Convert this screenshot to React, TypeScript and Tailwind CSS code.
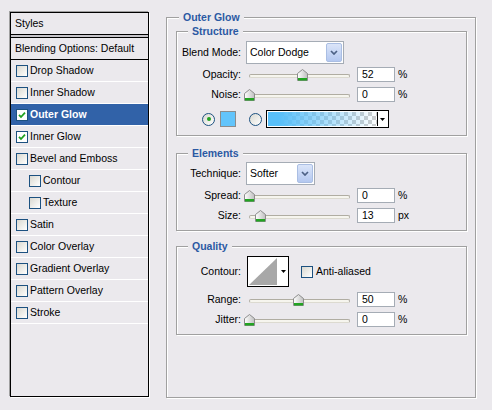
const styleItems = [
  { name: "Drop Shadow", checked: false, indent: false },
  { name: "Inner Shadow", checked: false, indent: false },
  { name: "Outer Glow", checked: true, indent: false, selected: true },
  { name: "Inner Glow", checked: true, indent: false },
  { name: "Bevel and Emboss", checked: false, indent: false },
  { name: "Contour", checked: false, indent: true },
  { name: "Texture", checked: false, indent: true },
  { name: "Satin", checked: false, indent: false },
  { name: "Color Overlay", checked: false, indent: false },
  { name: "Gradient Overlay", checked: false, indent: false },
  { name: "Pattern Overlay", checked: false, indent: false },
  { name: "Stroke", checked: false, indent: false },
];

const CheckBox = ({ checked }: { checked: boolean }) => (
  <span
    className={
      checked
        ? "flex h-[12px] w-[12px] shrink-0 items-center justify-center border border-[#1c5180] bg-white"
        : "flex h-[12px] w-[12px] shrink-0 items-center justify-center border border-[#1c5180] bg-[linear-gradient(135deg,#d9d8d0,#ffffff)]"
    }
  >
    {checked && (
      <svg width="8" height="8" viewBox="0 0 8 8">
        <path d="M1 3.8 L3 6 L7 1.6" stroke="#21a121" strokeWidth="1.8" fill="none" />
      </svg>
    )}
  </span>
);

const Radio = ({ on }: { on: boolean }) => (
  <span className="flex h-[13px] w-[13px] shrink-0 items-center justify-center rounded-full border border-[#1c5180] bg-[linear-gradient(135deg,#d9d8d0,#ffffff)]">
    {on && <span className="h-[4px] w-[4px] rounded-full bg-[#21a121]" />}
  </span>
);

const DownTriangle = () => (
  <svg width="5" height="3" viewBox="0 0 5 3">
    <path d="M0 0 H5 L2.5 3 Z" fill="#000" />
  </svg>
);

type SelectProps = { value: string; width: string };

const Select = ({ value, width }: SelectProps) => (
  <div className={`ml-[5px] flex h-[23px] items-center border border-[#a5acb5] bg-white pl-[3px] pr-px ${width}`}>
    <span className="flex-1">{value}</span>
    <span className="flex h-[19px] w-[16px] items-center justify-center rounded-[2px] border border-[#aabee3] bg-[linear-gradient(#dbe5f9,#b4c8f0)]">
      <svg width="8" height="5" viewBox="0 0 8 5">
        <path d="M1 1 L4 4 L7 1" stroke="#4d6185" strokeWidth="1.7" fill="none" />
      </svg>
    </span>
  </div>
);

const Slider = ({ pos }: { pos: number }) => (
  <div className="relative ml-[3px] flex h-[20px] w-[113px] items-center">
    <div className="ml-[5px] mr-[7px] mt-[4px] h-[4px] flex-1 rounded-[2px] border border-[#b0ada2] border-b-[#dcdad0] bg-[#f6f5ee]" />
    <svg
      className="absolute top-[5px]"
      style={{ left: Math.round(pos * 101) }}
      width="11"
      height="12"
      viewBox="0 0 11 12"
    >
      <defs>
        <linearGradient id="thumb" x1="0" y1="0" x2="1" y2="0">
          <stop offset="0" stopColor="#ffffff" />
          <stop offset="1" stopColor="#bfbfbf" />
        </linearGradient>
      </defs>
      <path d="M0.5 4.5 L5.5 0.5 L10.5 4.5 V11.5 H0.5 Z" fill="url(#thumb)" stroke="#8c8c8c" />
      <rect x="1" y="9" width="9" height="2.5" fill="#22a322" />
    </svg>
  </div>
);

type SliderRowProps = { label: string; pos: number; value: string; unit: string };

const SliderRow = ({ label, pos, value, unit }: SliderRowProps) => (
  <div className="flex h-[20px] items-center">
    <span className="w-[64px] text-right">{label}</span>
    <Slider pos={pos} />
    <div className="flex h-[15px] w-[38px] items-center border border-[#a5acb5] bg-white pl-[4px]">
      {value}
    </div>
    <span className="ml-[3px]">{unit}</span>
  </div>
);

const App = () => {
  return (
    <div className="flex h-[410px] w-[492px] bg-[#ebe9ed] font-['Liberation_Sans',Arial,sans-serif] text-[10.5px] leading-none text-black">
      {/* styles list */}
      <div className="ml-[10px] mt-[12px] h-[385px] w-[139px] border border-black shadow-[-1px_-1px_0_#a0a0a0,1px_1px_0_#ffffff]">
        <div className="flex h-[22px] items-center border-b border-black pl-[4px]">Styles</div>
        <div className="h-[2px] bg-[#c6c4c9]" />
        <div className="flex h-[23px] items-center border-y border-black pl-[4px]">
          Blending Options: Default
        </div>
        {styleItems.map((item) => (
          <div
            key={item.name}
            className={
              item.selected
                ? "flex h-[22px] items-center border-b border-white bg-[#3162a8] pl-[5px] font-bold text-white"
                : item.indent
                ? "flex h-[22px] items-center border-b border-white pl-[18px]"
                : "flex h-[22px] items-center border-b border-white pl-[5px]"
            }
          >
            <CheckBox checked={item.checked} />
            <span className="ml-[2px]">{item.name}</span>
          </div>
        ))}
      </div>

      {/* outer glow settings */}
      <fieldset className="ml-[17px] mt-[10px] h-[388px] w-[310px] border border-[#a0a0a0] shadow-[1px_1px_0_#ffffff,inset_1px_1px_0_#ffffff]">
        <legend className="ml-[12px] bg-[#ebe9ed] px-[4px] text-[10.5px] font-bold leading-[14px] text-[#2b59a3]">
          Outer Glow
        </legend>

        <fieldset className="ml-[9px] w-[291px] border border-[#a0a0a0] pb-[7px] shadow-[1px_1px_0_#ffffff,inset_1px_1px_0_#ffffff]">
          <legend className="ml-[11px] bg-[#ebe9ed] px-[4px] font-bold leading-[14px] text-[#2b59a3]">
            Structure
          </legend>
          <div className="mt-[3px] flex items-center">
            <span className="w-[64px] text-right">Blend Mode:</span>
            <Select value="Color Dodge" width="w-[98px]" />
          </div>
          <SliderRow label="Opacity:" pos={0.52} value="52" unit="%" />
          <SliderRow label="Noise:" pos={0} value="0" unit="%" />
          <div className="mt-[6px] flex h-[18px] items-center pl-[25px]">
            <Radio on={true} />
            <span className="ml-[5px] h-[16px] w-[16px] border border-[#8c8c8c] bg-[#62c4fb]" />
            <span className="ml-[13px]">
              <Radio on={false} />
            </span>
            <div className="ml-[4px] flex h-[18px] w-[123px] border border-black bg-white p-px">
              <div className="flex-1 bg-[image:repeating-conic-gradient(#cdcdcd_0_25%,#ffffff_0_50%)] bg-[length:8px_8px]">
                <div className="h-full w-full bg-[linear-gradient(to_right,#58bff9_10%,#58bff900)]" />
              </div>
              <div className="flex w-[10px] items-center justify-center border-l border-black">
                <DownTriangle />
              </div>
            </div>
          </div>
        </fieldset>

        <fieldset className="ml-[9px] mt-[10px] w-[291px] border border-[#a0a0a0] pb-[5px] shadow-[1px_1px_0_#ffffff,inset_1px_1px_0_#ffffff]">
          <legend className="ml-[11px] bg-[#ebe9ed] px-[4px] font-bold leading-[14px] text-[#2b59a3]">
            Elements
          </legend>
          <div className="mt-[2px] flex items-center">
            <span className="w-[64px] text-right">Technique:</span>
            <Select value="Softer" width="w-[69px]" />
          </div>
          <SliderRow label="Spread:" pos={0} value="0" unit="%" />
          <SliderRow label="Size:" pos={0.11} value="13" unit="px" />
        </fieldset>

        <fieldset className="ml-[9px] mt-[8px] w-[291px] border border-[#a0a0a0] pb-[5px] shadow-[1px_1px_0_#ffffff,inset_1px_1px_0_#ffffff]">
          <legend className="ml-[11px] bg-[#ebe9ed] px-[4px] font-bold leading-[14px] text-[#2b59a3]">
            Quality
          </legend>
          <div className="mt-[3px] flex h-[31px] items-center">
            <span className="w-[64px] text-right">Contour:</span>
            <div className="ml-[6px] flex h-[31px] w-[42px] border border-black bg-white">
              <svg className="m-px" width="28" height="27" viewBox="0 0 28 27">
                <path d="M0 27 L28 0 V27 Z" fill="#a8a8a8" />
              </svg>
              <div className="flex flex-1 items-center justify-center">
                <DownTriangle />
              </div>
            </div>
            <span className="ml-[12px]">
              <CheckBox checked={false} />
            </span>
            <span className="ml-[3px]">Anti-aliased</span>
          </div>
          <div className="mt-[2px]">
            <SliderRow label="Range:" pos={0.49} value="50" unit="%" />
          </div>
          <SliderRow label="Jitter:" pos={0} value="0" unit="%" />
        </fieldset>
      </fieldset>
    </div>
  );
};

export default App;
